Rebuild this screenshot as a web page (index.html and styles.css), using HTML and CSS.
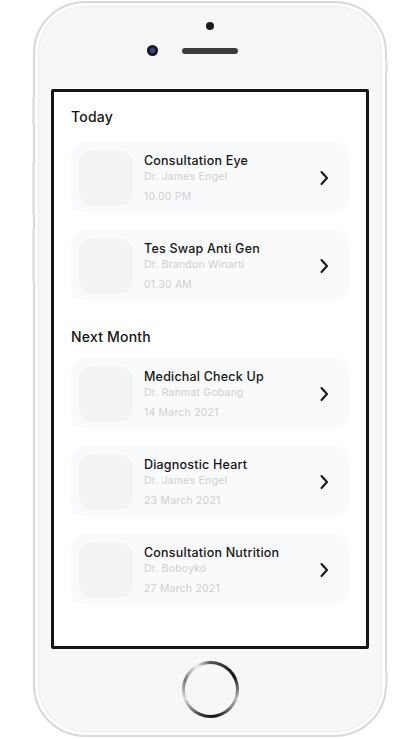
FILE: index.html
```html
<!DOCTYPE html>
<html>
<head>
<meta charset="utf-8">
<link rel="stylesheet" href="styles.css">
</head>
<body>
<div class="stage">
  <div class="phone">
    <span class="side side-l1"></span>
    <span class="side side-l2"></span>
    <span class="side side-l3"></span>
    <span class="side side-r1"></span>
    <span class="side side-r2"></span>
    <div class="top">
      <div class="dot"></div>
      <div class="sensors">
        <div class="cam"></div>
        <div class="speaker"></div>
        <div></div>
      </div>
    </div>
    <div class="screen">
      <h2 class="section first">Today</h2>
      <div class="list">
        <div class="card">
          <div class="thumb"></div>
          <div class="info">
            <div class="title">Consultation Eye</div>
            <div class="doc">Dr. James Engel</div>
            <div class="when">10.00 PM</div>
          </div>
          <svg class="chev" viewBox="0 0 10 16" width="10" height="16"><path d="M2.5 2 L8 8 L2.5 14" fill="none" stroke="#111" stroke-width="2" stroke-linecap="round" stroke-linejoin="round"/></svg>
        </div>
        <div class="card">
          <div class="thumb"></div>
          <div class="info">
            <div class="title">Tes Swap Anti Gen</div>
            <div class="doc">Dr. Brandon Winarti</div>
            <div class="when">01.30 AM</div>
          </div>
          <svg class="chev" viewBox="0 0 10 16" width="10" height="16"><path d="M2.5 2 L8 8 L2.5 14" fill="none" stroke="#111" stroke-width="2" stroke-linecap="round" stroke-linejoin="round"/></svg>
        </div>
      </div>
      <h2 class="section second">Next Month</h2>
      <div class="list">
        <div class="card">
          <div class="thumb"></div>
          <div class="info">
            <div class="title">Medichal Check Up</div>
            <div class="doc">Dr. Rahmat Gobang</div>
            <div class="when">14 March 2021</div>
          </div>
          <svg class="chev" viewBox="0 0 10 16" width="10" height="16"><path d="M2.5 2 L8 8 L2.5 14" fill="none" stroke="#111" stroke-width="2" stroke-linecap="round" stroke-linejoin="round"/></svg>
        </div>
        <div class="card">
          <div class="thumb"></div>
          <div class="info">
            <div class="title">Diagnostic Heart</div>
            <div class="doc">Dr. James Engel</div>
            <div class="when">23 March 2021</div>
          </div>
          <svg class="chev" viewBox="0 0 10 16" width="10" height="16"><path d="M2.5 2 L8 8 L2.5 14" fill="none" stroke="#111" stroke-width="2" stroke-linecap="round" stroke-linejoin="round"/></svg>
        </div>
        <div class="card">
          <div class="thumb"></div>
          <div class="info">
            <div class="title">Consultation Nutrition</div>
            <div class="doc">Dr. Boboyko</div>
            <div class="when">27 March 2021</div>
          </div>
          <svg class="chev" viewBox="0 0 10 16" width="10" height="16"><path d="M2.5 2 L8 8 L2.5 14" fill="none" stroke="#111" stroke-width="2" stroke-linecap="round" stroke-linejoin="round"/></svg>
        </div>
      </div>
    </div>
    <div class="bottom">
      <div class="home"><div class="home-in"></div></div>
    </div>
  </div>
</div>
</body>
</html>
```
FILE: styles.css
```css
* { box-sizing: border-box; }
html, body { margin: 0; padding: 0; background: #fff; }
body { font-family: Inter, "Noto Sans", sans-serif; }

.stage {
  width: 418px;
  height: 739px;
  padding: 1px 0 0 33px;
}

.phone {
  position: relative;
  width: 354px;
  height: 736px;
  border: 2px solid #d9d9d9;
  border-radius: 52px;
  background: #f7f7f7;
  box-shadow: inset 0 0 0 3px #ffffff, inset 0 0 0 4px #ececec;
  display: flex;
  flex-direction: column;
  align-items: center;
}

.side {
  position: absolute;
  width: 3px;
  background: #e3e3e3;
  border-radius: 1px;
}
.side-l1 { left: -3px; top: 94px; height: 28px; }
.side-l2 { left: -3px; top: 159px; height: 53px; }
.side-l3 { left: -3px; top: 226px; height: 53px; }
.side-r1 { right: -3px; top: 58px; height: 12px; }
.side-r2 { right: -3px; top: 668px; height: 13px; }

.top {
  width: 100%;
  height: 86px;
  display: flex;
  flex-direction: column;
  align-items: center;
}
.dot {
  width: 8px;
  height: 8px;
  border-radius: 50%;
  background: #1b1b1b;
  margin-top: 19px;
}
.sensors {
  width: 100%;
  margin-top: 15px;
  display: grid;
  grid-template-columns: 1fr auto 1fr;
  align-items: center;
}
.cam {
  justify-self: end;
  margin-right: 24px;
  width: 11px;
  height: 11px;
  border-radius: 50%;
  background: radial-gradient(circle, #36488a 0 2px, #1b2240 3px, #151515 4px);
}
.speaker {
  width: 56px;
  height: 6px;
  border-radius: 3px;
  background: #3b3b3b;
}

.screen {
  width: 318px;
  height: 560px;
  border: 3px solid #141414;
  border-radius: 2px;
  background: #fff;
  padding: 15px 17px 0 17px;
}

.section {
  margin: 0;
  font-size: 14px;
  line-height: 20px;
  font-weight: 500;
  color: #151515;
  letter-spacing: 0.2px;
}
.section.first { margin-bottom: 15px; }
.section.second { margin-top: 26px; margin-bottom: 11px; }

.list {
  display: flex;
  flex-direction: column;
  gap: 17px;
}

.card {
  height: 71px;
  border-radius: 15px;
  background: #f9fafb;
  padding: 8px 20px 8px 8px;
  display: flex;
  align-items: center;
}
.thumb {
  width: 54px;
  height: 54px;
  border-radius: 12px;
  background: #f2f3f5;
  flex: none;
}
.info {
  flex: 1;
  margin-left: 11px;
  display: flex;
  flex-direction: column;
  align-self: stretch;
  padding-top: 2px;
}
.title {
  font-size: 12.5px;
  line-height: 18px;
  font-weight: 500;
  color: #161616;
  letter-spacing: 0.2px;
}
.doc {
  font-size: 10.5px;
  line-height: 14px;
  color: #cfcfcf;
  letter-spacing: 0.2px;
}
.when {
  margin-top: 6px;
  font-size: 10.5px;
  line-height: 14px;
  color: #cfcfcf;
  letter-spacing: 0.2px;
}
.chev { flex: none; }

.bottom {
  width: 100%;
  flex: 1;
  display: flex;
  justify-content: center;
  padding-top: 12px;
}
.home {
  width: 57px;
  height: 57px;
  border-radius: 50%;
  background: conic-gradient(from 0deg, #555 0deg, #111 60deg, #bbb 110deg, #111 170deg, #333 200deg, #ddd 250deg, #777 290deg, #eee 330deg, #555 360deg);
  display: flex;
  align-items: center;
  justify-content: center;
}
.home-in {
  width: 51px;
  height: 51px;
  border-radius: 50%;
  background: #f7f7f7;
}
```
